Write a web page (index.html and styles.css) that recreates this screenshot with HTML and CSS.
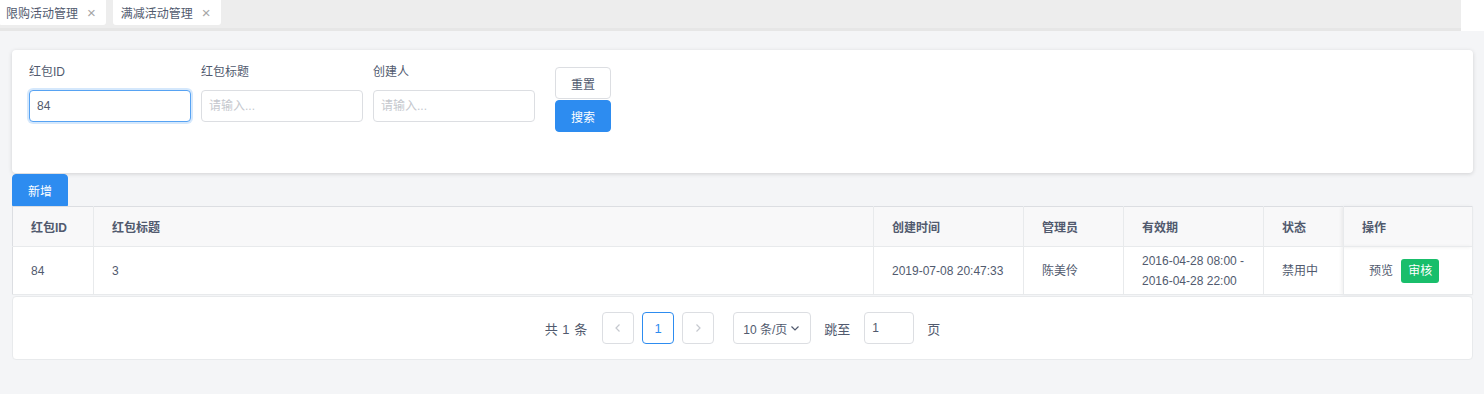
FILE: index.html
```html
<!DOCTYPE html>
<html lang="zh-CN">
<head>
    <meta charset="UTF-8">
    <title>红包管理</title>
    <link rel="stylesheet" href="styles.css">
</head>
<body>
    <div class="tabs-bar">
        <div class="tab">限购活动管理 <span class="tab-close">&times;</span></div>
        <div class="tab">满减活动管理 <span class="tab-close">&times;</span></div>
    </div>

    <div class="page">
        <div class="filter-card">
            <div class="field">
                <label>红包ID</label>
                <input type="text" class="input input-focus" value="84">
            </div>
            <div class="field">
                <label>红包标题</label>
                <input type="text" class="input" placeholder="请输入...">
            </div>
            <div class="field">
                <label>创建人</label>
                <input type="text" class="input" placeholder="请输入...">
            </div>
            <div class="filter-btns">
                <button class="btn btn-default">重置</button>
                <button class="btn btn-primary">搜索</button>
            </div>
        </div>

        <button class="btn btn-primary btn-add">新增</button>

        <table class="data-table">
            <colgroup>
                <col class="w-id">
                <col>
                <col class="w-time">
                <col class="w-admin">
                <col class="w-valid">
                <col class="w-status">
                <col class="w-action">
            </colgroup>
            <thead>
                <tr>
                    <th>红包ID</th>
                    <th>红包标题</th>
                    <th>创建时间</th>
                    <th>管理员</th>
                    <th>有效期</th>
                    <th>状态</th>
                    <th class="col-action">操作</th>
                </tr>
            </thead>
            <tbody>
                <tr>
                    <td>84</td>
                    <td>3</td>
                    <td>2019-07-08 20:47:33</td>
                    <td>陈美伶</td>
                    <td>2016-04-28 08:00 -<br>2016-04-28 22:00</td>
                    <td>禁用中</td>
                    <td class="col-action">
                        <span class="link-preview">预览</span>
                        <span class="tag-audit">审核</span>
                    </td>
                </tr>
            </tbody>
        </table>

        <div class="pager-card">
            <span class="pager-total">共 1 条</span>
            <span class="pager-item pager-disabled">
                <svg width="10" height="10" viewBox="0 0 10 10"><path d="M6.5 1.5 L3 5 L6.5 8.5" fill="none" stroke="currentColor" stroke-width="1.2"/></svg>
            </span>
            <span class="pager-item pager-active">1</span>
            <span class="pager-item pager-disabled">
                <svg width="10" height="10" viewBox="0 0 10 10"><path d="M3.5 1.5 L7 5 L3.5 8.5" fill="none" stroke="currentColor" stroke-width="1.2"/></svg>
            </span>
            <span class="pager-size">10 条/页
                <svg width="10" height="10" viewBox="0 0 10 10"><path d="M1.5 3.5 L5 7 L8.5 3.5" fill="none" stroke="currentColor" stroke-width="1.2"/></svg>
            </span>
            <span class="pager-jump">跳至</span>
            <input type="text" class="pager-input" value="1">
            <span class="pager-unit">页</span>
        </div>
    </div>
</body>
</html>
```

FILE: styles.css
```css
body {
    margin: 0;
    background-color: #f4f5f7;
    font-family: "Liberation Sans", Arial, "Noto Sans CJK SC", sans-serif;
    font-size: 12px;
    color: #515a6e;
}

.tabs-bar {
    display: flex;
    gap: 7px;
    width: 1461px;
    height: 28px;
    background-color: #ededed;
    border-bottom: 3px solid #e6e6e6;
    box-shadow: 23px 0 0 #fff;
}

.tab {
    display: flex;
    align-items: center;
    gap: 9px;
    height: 25px;
    padding: 0 10px 0 8px;
    background-color: #fff;
    border-radius: 0 0 3px 3px;
    font-size: 12px;
    color: #515a6e;
}

.tab:first-child {
    margin-left: -1px;
    padding-left: 7px;
}

.tab-close {
    font-size: 15px;
    color: #a6a6a6;
    line-height: 1;
}

.page {
    padding: 19px 11px 33px 12px;
}

.filter-card {
    display: flex;
    align-items: flex-start;
    gap: 10px;
    height: 123px;
    padding: 0 16px 0 17px;
    background-color: #fff;
    border-radius: 4px;
    box-shadow: 0 1px 4px rgba(0, 0, 0, 0.15);
    box-sizing: border-box;
}

.field {
    display: flex;
    flex-direction: column;
    margin-top: 15px;
}

.field label {
    height: 22px;
    line-height: 14px;
    margin-bottom: 3px;
}

.input {
    width: 162px;
    height: 32px;
    padding: 0 7px;
    border: 1px solid #dcdee2;
    border-radius: 4px;
    box-sizing: border-box;
    font-family: inherit;
    font-size: 12px;
    color: #515a6e;
    outline: none;
}

.input::placeholder {
    color: #c5c8ce;
}

.input-focus {
    border-color: #57a3f3;
    box-shadow: 0 0 0 2px rgba(45, 140, 240, 0.2);
}

.filter-btns {
    display: flex;
    flex-direction: column;
    gap: 1px;
    margin: 17px 0 0 10px;
}

.btn {
    height: 32px;
    padding: 0 15px;
    border: 1px solid #dcdee2;
    border-radius: 4px;
    font-family: inherit;
    font-size: 12px;
    cursor: pointer;
}

.btn-default {
    background-color: #fff;
    color: #515a6e;
}

.btn-primary {
    background-color: #2d8cf0;
    border-color: #2d8cf0;
    color: #fff;
}

.btn-add {
    display: block;
    height: 32px;
    margin-top: 1px;
    border-radius: 4px 4px 0 0;
}

.data-table {
    width: 100%;
    table-layout: fixed;
    border-collapse: collapse;
    background-color: #fff;
    border: 1px solid #dcdee2;
}

.w-id { width: 81px; }
.w-time { width: 150px; }
.w-admin { width: 100px; }
.w-valid { width: 140px; }
.w-status { width: 80px; }
.w-action { width: 129px; }

.data-table th,
.data-table td {
    padding: 0 18px;
    text-align: left;
    border-right: 1px solid #e8eaec;
    border-bottom: 1px solid #e8eaec;
}

.data-table th {
    height: 39px;
    background-color: #f8f8f9;
    font-weight: bold;
    color: #515a6e;
}

.data-table td {
    height: 47px;
    line-height: 20px;
}

.col-action {
    box-shadow: -2px 0 4px rgba(0, 0, 0, 0.08);
}

td.col-action {
    padding-left: 25px;
    padding-right: 0;
}

.link-preview {
    margin-right: 5px;
}

.tag-audit {
    display: inline-block;
    padding: 0 7px;
    height: 24px;
    line-height: 24px;
    background-color: #19be6b;
    color: #fff;
    border-radius: 3px;
}

.pager-card {
    display: flex;
    align-items: center;
    justify-content: center;
    height: 64px;
    margin-top: 1px;
    background-color: #fff;
    border: 1px solid #e8eaec;
    border-radius: 4px;
    box-sizing: border-box;
    font-size: 13px;
}

.pager-total {
    margin-right: 15px;
    word-spacing: 1px;
}

.pager-item {
    display: flex;
    align-items: center;
    justify-content: center;
    width: 32px;
    height: 32px;
    margin-right: 8px;
    border: 1px solid #dcdee2;
    border-radius: 4px;
    box-sizing: border-box;
    font-size: 13px;
}

.pager-disabled {
    color: #c5c8ce;
}

.pager-active {
    border-color: #2d8cf0;
    color: #2d8cf0;
}

.pager-size {
    display: flex;
    align-items: center;
    gap: 3px;
    width: 78px;
    height: 32px;
    margin-left: 11px;
    padding: 0 7px 0 9px;
    border: 1px solid #dcdee2;
    border-radius: 4px;
    box-sizing: border-box;
    font-size: 12px;
    white-space: nowrap;
}

.pager-jump {
    margin-left: 13px;
    margin-right: 14px;
}

.pager-input {
    width: 50px;
    height: 32px;
    padding: 0 7px;
    border: 1px solid #dcdee2;
    border-radius: 4px;
    box-sizing: border-box;
    font-family: inherit;
    font-size: 12px;
    color: #515a6e;
}

.pager-unit {
    margin-left: 13px;
}
```
